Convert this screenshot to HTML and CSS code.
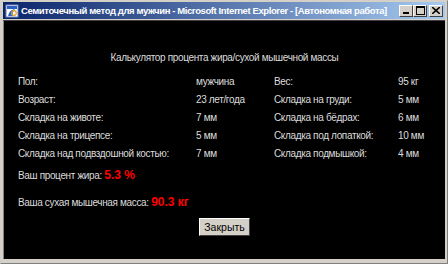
FILE: index.html
```html
<!DOCTYPE html>
<html lang="ru">
<head>
    <meta charset="UTF-8">
    <title>Семиточечный метод для мужчин</title>
    <link rel="stylesheet" href="styles.css">
</head>
<body>
    <div class="window">
        <div class="titlebar">
            <svg class="app-icon" width="14" height="14" viewBox="0 0 14 14">
                <rect x="1" y="1" width="12" height="12" fill="#fff" stroke="#6c84b8"/>
                <rect x="2" y="2" width="10" height="3" fill="#2b5fc4"/>
                <path d="M3 12 Q4 6 10 5 Q7 8 8 12 Z" fill="#2a66d8"/>
                <circle cx="9" cy="9" r="2.3" fill="none" stroke="#e8a020" stroke-width="1.2"/>
            </svg>
            <span class="title">Семиточечный метод для мужчин - Microsoft Internet Explorer - [Автономная работа]</span>
            <div class="caption-buttons">
                <span class="cbtn"><svg width="8" height="7" viewBox="0 0 8 7"><rect x="1" y="5" width="6" height="2" fill="#000"/></svg></span>
                <span class="cbtn"><svg width="9" height="9" viewBox="0 0 9 9"><rect x="0.5" y="0.5" width="8" height="8" fill="none" stroke="#000"/><rect x="0" y="0" width="9" height="2" fill="#000"/></svg></span>
                <span class="cbtn close"><svg width="8" height="7" viewBox="0 0 8 7"><path d="M0 0 L8 7 M8 0 L0 7" stroke="#000" stroke-width="1.6"/></svg></span>
            </div>
        </div>
        <div class="content">
            <div class="heading">Калькулятор процента жира/сухой мышечной массы</div>
            <table class="data">
                <tr><td class="l1">Пол:</td><td class="v1">мужчина</td><td class="l2">Вес:</td><td>95 кг</td></tr>
                <tr><td class="l1">Возраст:</td><td class="v1">23 лет/года</td><td class="l2">Складка на груди:</td><td>5 мм</td></tr>
                <tr><td class="l1">Складка на животе:</td><td class="v1">7 мм</td><td class="l2">Складка на бёдрах:</td><td>6 мм</td></tr>
                <tr><td class="l1">Складка на трицепсе:</td><td class="v1">5 мм</td><td class="l2">Складка под лопаткой:</td><td>10 мм</td></tr>
                <tr><td class="l1">Складка над подвздошной костью:</td><td class="v1">7 мм</td><td class="l2">Складка подмышкой:</td><td>4 мм</td></tr>
            </table>
            <p class="result fat">Ваш процент жира: <b>5.3 %</b></p>
            <p class="result">Ваша сухая мышечная масса: <b>90.3 кг</b></p>
            <div class="actions"><button class="close-btn">Закрыть</button></div>
        </div>
    </div>
</body>
</html>
```

FILE: styles.css
```css
body {
    margin: 0;
    font-family: "Liberation Sans", Arial, sans-serif;
}
.window {
    width: 448px;
    height: 264px;
    box-sizing: border-box;
    background-color: #d4d0c8;
    border: 1px solid #808080;
    border-top-color: #d4d0c8;
    border-left-color: #d4d0c8;
    padding: 1px 2px 4px 2px;
    display: flex;
    flex-direction: column;
}
.titlebar {
    height: 17px;
    display: flex;
    align-items: center;
    padding-left: 2px;
    background: linear-gradient(to right, #0a246a, #a6caf0);
    color: white;
}
.app-icon {
    flex-shrink: 0;
}
.title {
    margin-left: 2px;
    font-family: "Liberation Sans", Arial, sans-serif;
    font-weight: bold;
    font-size: 9.5px;
    letter-spacing: -0.4px;
    white-space: nowrap;
    overflow: hidden;
    flex: 1;
}
.caption-buttons {
    display: flex;
    margin-right: 2px;
}
.cbtn {
    width: 14px;
    height: 12px;
    box-sizing: border-box;
    background-color: #d4d0c8;
    border: 1px solid;
    border-color: #fff #404040 #404040 #fff;
    display: flex;
    align-items: center;
    justify-content: center;
}
.cbtn.close {
    margin-left: 2px;
}
.content {
    flex: 1;
    margin-top: 1px;
    background-color: #000;
    color: #dcdcdc;
    font-size: 10px;
    line-height: 12px;
    letter-spacing: -0.35px;
    padding: 31px 14px 0 14px;
    border-top: 1px solid #404040;
    border-left: 1px solid #808080;
}
.heading {
    text-align: center;
    margin-bottom: 9px;
}
.data {
    border-collapse: collapse;
    font-size: 10px;
    color: #dcdcdc;
}
.data td {
    padding: 0;
    height: 18px;
    white-space: nowrap;
}
.l1 {
    width: 178px;
}
.v1 {
    width: 78px;
}
.l2 {
    width: 124px;
}
.result {
    margin: 10px 0 0 0;
    line-height: 16px;
}
.result.fat {
    margin-top: 4px;
}
.result b {
    color: #ff0000;
    font-size: 12px;
    letter-spacing: 0;
}
.actions {
    text-align: center;
    margin-top: 7px;
}
.close-btn {
    width: 51px;
    height: 18px;
    padding: 0;
    font-family: "Liberation Sans", Arial, sans-serif;
    font-size: 10.5px;
    background-color: #d4d0c8;
    border: 1px solid;
    border-color: #fff #404040 #404040 #fff;
    color: #000;
}
```
